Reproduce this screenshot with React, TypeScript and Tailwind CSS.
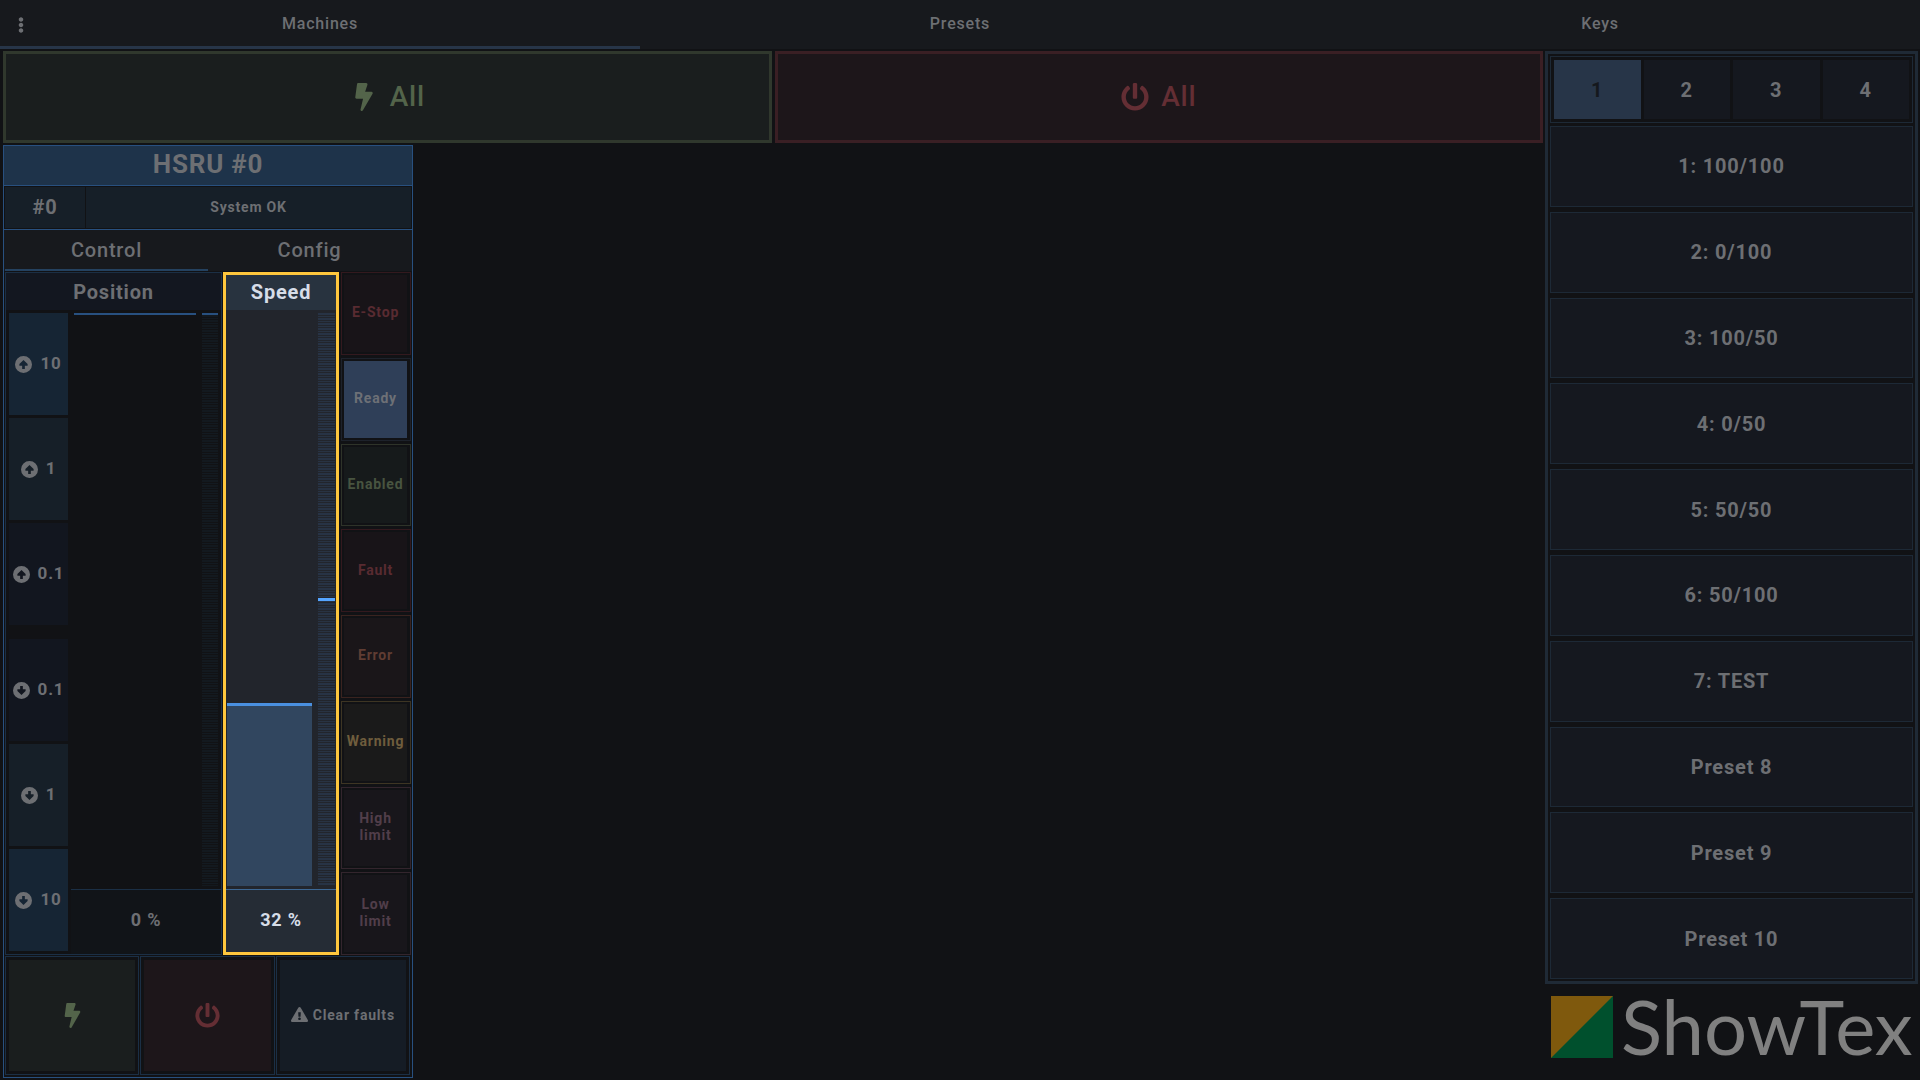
import { FaBolt, FaPowerOff, FaExclamationTriangle, FaEllipsisV } from 'react-icons/fa';

const tabs = ['Machines', 'Presets', 'Keys'];

const presets = [
  '1: 100/100',
  '2: 0/100',
  '3: 100/50',
  '4: 0/50',
  '5: 50/50',
  '6: 50/100',
  '7: TEST',
  'Preset 8',
  'Preset 9',
  'Preset 10',
];

const stepsUp = [
  { label: '10', bg: 'bg-[#162534]' },
  { label: '1', bg: 'bg-[#161f28]' },
  { label: '0.1', bg: 'bg-[#12161f]' },
];

const stepsDown = [...stepsUp].reverse();

const statuses = [
  { label: 'E-Stop', border: 'border-[#33191e]', fill: 'bg-[#181418] text-[#592b31]' },
  { label: 'Ready', border: 'border-[#1d222b]', fill: 'bg-[#2f3f58] text-[#6d7076]' },
  { label: 'Enabled', border: 'border-[#2e3329]', fill: 'bg-[#161a1b] text-[#485440]' },
  { label: 'Fault', border: 'border-[#33191e]', fill: 'bg-[#181418] text-[#592b31]' },
  { label: 'Error', border: 'border-[#3a231f]', fill: 'bg-[#1a1619] text-[#603d33]' },
  { label: 'Warning', border: 'border-[#3d3523]', fill: 'bg-[#1a1a1a] text-[#6f5d3d]' },
  { label: 'High limit', border: 'border-[#33252d]', fill: 'bg-[#18161b] text-[#513e4a]' },
  { label: 'Low limit', border: 'border-[#33252d]', fill: 'bg-[#18161b] text-[#513e4a]' },
];

function ArrowDisc({ up }: { up: boolean }) {
  return (
    <svg viewBox="0 0 24 24" className={up ? 'size-[17px] shrink-0' : 'size-[17px] shrink-0 rotate-180'}>
      <path
        fill="currentColor"
        fillRule="evenodd"
        d="M12 0a12 12 0 1 1 0 24a12 12 0 1 1 0-24ZM12 5.5L6.2 11.3v2.4h3.9v4.8h3.8v-4.8h3.9v-2.4Z"
      />
    </svg>
  );
}

function StepButton({ label, bg, up }: { label: string; bg: string; up: boolean }) {
  return (
    <button className={`flex-1 flex items-center justify-center gap-2 ${bg}`}>
      <ArrowDisc up={up} />
      {label}
    </button>
  );
}

function PositionPanel() {
  return (
    <section className="w-[217px] flex flex-col border border-[#1b2f45]">
      <h3 className="h-[37px] flex items-center justify-center bg-[#131720] text-xl">Position</h3>
      <div className="flex-1 flex gap-[3px] pl-[3px]">
        <div className="w-[59px] flex flex-col gap-[14px] py-[3px] text-[17px]">
          <div className="flex-1 flex flex-col gap-[3px]">
            {stepsUp.map((s) => (
              <StepButton key={s.label} {...s} up />
            ))}
          </div>
          <div className="flex-1 flex flex-col gap-[3px]">
            {stepsDown.map((s) => (
              <StepButton key={s.label} {...s} up={false} />
            ))}
          </div>
        </div>
        <div className="flex-1 flex flex-col">
          <div className="flex-1 flex gap-[6px] p-[3px]">
            <div className="flex-1 border-t-2 border-[#28507f]" />
            <div className="w-4 border-t-2 border-[#28507f] bg-[repeating-linear-gradient(#13191f_0_2px,#111215_2px_3px,#131a21_3px_4px,#111215_4px_5px)]" />
          </div>
          <div className="h-[65px] flex items-center justify-center border-t border-[#1b2f45] pb-1 bg-[#111418] text-lg">
            0 %
          </div>
        </div>
      </div>
    </section>
  );
}

function SpeedPanel() {
  const speed = 32;
  const actual = 50;
  return (
    <section className="w-[116px] flex flex-col border-[3px] border-[#ffc73d] bg-[#22252c] text-[#d6dde8]">
      <h3 className="h-[35px] flex items-center justify-center pb-[2px] bg-[#28333f] text-xl">Speed</h3>
      <div className="flex-1 flex gap-[6px] pt-[3px] px-px pb-[3px]">
        <div className="flex-1 flex flex-col justify-end">
          <div className="border-t-[3px] border-[#4a90e0] bg-[#31465f]" style={{ height: `${speed}%` }} />
        </div>
        <div className="w-[17px] flex flex-col justify-center bg-[repeating-linear-gradient(#273345_0_2px,#22252c_2px_3px,#283343_3px_4px,#22252c_4px_5px)]">
          <div className="h-[3px] bg-[#55a5ff]" style={{ width: `${actual * 2}%` }} />
        </div>
      </div>
      <div className="h-[63px] flex items-center justify-center border-t border-[#3c6794] pb-[2px] bg-[#252c35] text-lg">
        {speed} %
      </div>
    </section>
  );
}

function Machine() {
  return (
    <article className="w-[410px] flex-1 flex flex-col border border-[#28507f]">
      <h2 className="h-10 flex items-center justify-center border-b border-[#28507f] pb-[2px] bg-[#1e334a] text-[26px]">
        HSRU #0
      </h2>
      <div className="h-11 flex gap-px p-px border-b border-[#28507f]">
        <div className="w-20 flex items-center justify-center pb-[2px] bg-[#161f28] text-xl">#0</div>
        <div className="flex-1 flex items-center justify-center pb-[2px] bg-[#161f28] text-sm">System OK</div>
      </div>
      <nav className="h-[41px] grid grid-cols-2 px-px bg-[#17191d] text-xl font-medium">
        <button className="border-b-2 border-[#24415f]">Control</button>
        <button className="border-b-2 border-transparent">Config</button>
      </nav>
      <div className="flex-1 flex flex-col gap-px p-px pb-[2px]">
        <div className="flex-1 flex gap-px">
          <PositionPanel />
          <SpeedPanel />
          <div className="flex-1 flex flex-col gap-[3px] ml-px text-sm leading-[17px]">
            {statuses.map((s) => (
              <div key={s.label} className={`flex-1 flex border p-[2px] pr-[3px] ${s.border}`}>
                <div className={`flex-1 min-w-0 flex items-center justify-center text-center pb-px ${s.fill}`}>
                  <span className={s.label.includes(' ') ? 'w-10' : ''}>{s.label}</span>
                </div>
              </div>
            ))}
          </div>
        </div>
        <div className="h-[119px] grid grid-cols-3 gap-px pr-px text-sm">
          <div className="flex border border-[#1b2f45] p-[3px]">
            <button aria-label="Enable" className="flex-1 flex items-center justify-center bg-[#1a1e1e] text-[#53644a]">
              <FaBolt className="size-[25px]" />
            </button>
          </div>
          <div className="flex border border-[#1b2f45] p-[3px]">
            <button aria-label="Disable" className="flex-1 flex items-center justify-center bg-[#1d161a] text-[#642e34]">
              <FaPowerOff className="size-[25px]" />
            </button>
          </div>
          <div className="flex border border-[#1b2f45] p-[3px]">
            <button className="flex-1 flex items-center justify-center gap-[5px] pb-[2px] bg-[#151c25]">
              <FaExclamationTriangle className="size-[17px]" />
              Clear faults
            </button>
          </div>
        </div>
      </div>
    </article>
  );
}

function Presets() {
  return (
    <aside className="w-[373px] flex flex-col">
      <div className="flex-1 flex flex-col gap-[5px] border-[3px] border-[#1f2a36] p-[2px] text-xl">
        <div className="h-[67px] grid grid-cols-4 gap-[3px] border border-[#1d2936] p-[3px] -mb-[2px]">
          {[1, 2, 3, 4].map((n) => (
            <button key={n} className={n === 1 ? 'bg-[#273548] text-[#15181d]' : 'bg-[#15181f]'}>
              {n}
            </button>
          ))}
        </div>
        {presets.map((p) => (
          <button key={p} className="flex-1 border border-[#1d2936] bg-[#15181f]">
            {p}
          </button>
        ))}
      </div>
      <div className="h-24 flex items-start gap-2 pt-3 pl-[6px]">
        <svg viewBox="0 0 62 62" className="size-[62px] shrink-0">
          <rect width="62" height="62" fill="#00502d" />
          <path d="M0 0H62L0 62Z" fill="#7f590d" />
        </svg>
        <span className="font-[Lato] font-normal text-[76px] leading-[60px] tracking-normal text-[#808080]">ShowTex</span>
      </div>
    </aside>
  );
}

export default function App() {
  return (
    <div className="min-h-screen flex flex-col bg-[#111215] font-[Roboto,sans-serif] font-bold tracking-wider text-[#6d6f73]">
      <header className="relative h-[49px] bg-[#17191d]">
        <nav className="h-full grid grid-cols-3 text-base font-medium">
          {tabs.map((t, i) => (
            <button
              key={t}
              className={i === 0 ? 'border-b-[3px] border-[#273548] pt-[2px]' : 'border-b-[3px] border-transparent pt-[2px]'}
            >
              {t}
            </button>
          ))}
        </nav>
        <button aria-label="Menu" className="absolute left-[13px] top-[17px] w-4 flex justify-center">
          <FaEllipsisV className="h-4" />
        </button>
      </header>

      <main className="flex-1 flex gap-[2px] pt-[2px] px-[2px]">
        <div className="flex-1 flex flex-col gap-[2px] pl-px pb-[2px]">
          <div className="h-[92px] grid grid-cols-2 gap-[3px] text-[28px] font-medium">
            <button className="flex items-center justify-center gap-3 border-[3px] border-[#30382d] bg-[#1a1e1e] text-[#53644a]">
              <FaBolt />
              All
            </button>
            <button className="flex items-center justify-center gap-3 border-[3px] border-[#3a1f24] bg-[#1d161a] text-[#642e34]">
              <FaPowerOff />
              All
            </button>
          </div>
          <Machine />
        </div>
        <Presets />
      </main>
    </div>
  );
}
